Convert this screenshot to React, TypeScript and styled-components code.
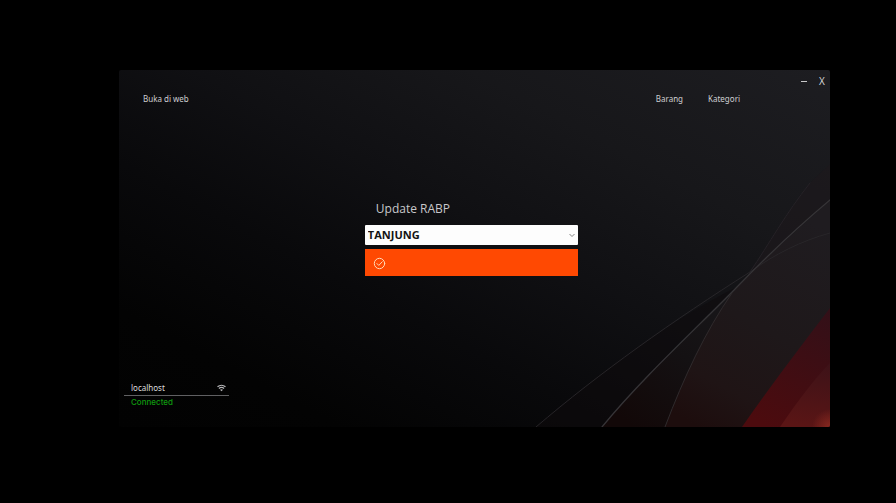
import React from "react";
import styled, { createGlobalStyle } from "styled-components";

const GlobalStyle = createGlobalStyle`
  *, *::before, *::after { box-sizing: border-box; }
  body {
    margin: 0;
    background: #000;
    color: #d2d2d4;
    font-family: "Open Sans", "Noto Sans", sans-serif;
  }
`;

const Desktop = styled.div`
  display: flex;
  min-height: 100vh;
  padding: 70px 66px 76px 119px;
`;

const AppWindow = styled.main`
  position: relative;
  isolation: isolate;
  flex: 1;
  display: grid;
  grid-template-rows: auto auto 1fr auto;
  overflow: hidden;
  border-radius: 2px;
  background: linear-gradient(208deg, #1d1d21 0%, #17171a 26%, #101013 46%, #09090b 64%, #030303 84%, #020202 100%);
`;

const Artwork = styled.svg`
  position: absolute;
  inset: 0;
  z-index: -1;
  width: 100%;
  height: 100%;
`;

const TitleBar = styled.header`
  display: flex;
  justify-content: flex-end;
  gap: 8px;
  height: 22px;
  padding-right: 3px;
`;

const WindowButton = styled.button`
  display: grid;
  place-items: center;
  width: 10px;
  height: 22px;
  padding: 0;
  border: 0;
  background: none;
  color: #d8d8da;
  font: 10px/22px "Open Sans", sans-serif;
`;

const Nav = styled.nav`
  display: flex;
  justify-content: space-between;
  height: 14px;
  padding: 0 90px 0 24px;
`;

const NavGroup = styled.div`
  display: flex;
  gap: 25px;
`;

const NavLink = styled.a`
  color: #cfcfd1;
  font-family: "Noto Sans", "Open Sans", sans-serif;
  font-size: 8px;
  line-height: 14px;
  text-decoration: none;
`;

const Form = styled.form`
  justify-self: center;
  display: flex;
  flex-direction: column;
  width: 30%;
  min-width: 213px;
  padding-top: 94px;
  margin-right: 6px;
`;

const FieldLabel = styled.label`
  padding-left: 11px;
  margin-bottom: 7px;
  color: #c8c8ca;
  font-size: 12px;
  line-height: 18px;
`;

const SelectBox = styled.div`
  position: relative;
  height: 20px;
  margin-bottom: 4px;
`;

const Select = styled.select`
  appearance: none;
  display: block;
  width: 100%;
  height: 20px;
  padding: 0 20px 0 3px;
  border: 0;
  border-radius: 1px;
  background: #fdfdfd;
  color: #141414;
  font: bold 11px/20px "Open Sans", "Noto Sans", sans-serif;
`;

const Chevron = styled.svg`
  position: absolute;
  top: 8px;
  right: 3px;
  width: 6px;
  height: 5px;
  pointer-events: none;
`;

const SubmitButton = styled.button`
  display: flex;
  align-items: center;
  height: 27px;
  padding: 1px 8px 0;
  border: 0;
  background: #ff4902;
`;

const Status = styled.section`
  width: 105px;
  margin: 0 0 18px 5px;
`;

const HostRow = styled.div`
  display: flex;
  align-items: center;
  justify-content: space-between;
  height: 15px;
  padding: 0 3px 0 7px;
  border-bottom: 1px solid #606062;
`;

const HostInput = styled.input`
  width: 70px;
  height: 14px;
  padding: 0;
  border: 0;
  background: none;
  color: #dcdcde;
  font: 8px/14px "Noto Sans", "Open Sans", sans-serif;
`;

const StatusText = styled.p`
  margin: 0;
  padding-left: 7px;
  color: #0f9a0f;
  font-family: Inter, sans-serif;
  font-size: 8px;
  font-weight: 500;
  line-height: 13px;
`;

function Ribbons() {
  return (
    <Artwork viewBox="0 0 711 357" preserveAspectRatio="xMaxYMax slice" aria-hidden="true">
      <defs>
        <linearGradient id="veil" gradientUnits="userSpaceOnUse" x1="690" y1="150" x2="580" y2="357">
          <stop offset="0" stopColor="#1f1c20" />
          <stop offset="0.5" stopColor="#1e181a" />
          <stop offset="0.8" stopColor="#1f1415" />
          <stop offset="1" stopColor="#1d0d0d" />
        </linearGradient>
        <linearGradient id="fold" gradientUnits="userSpaceOnUse" x1="618" y1="217" x2="515" y2="357">
          <stop offset="0" stopColor="#19181b" />
          <stop offset="0.5" stopColor="#141113" />
          <stop offset="1" stopColor="#120808" />
        </linearGradient>
        <linearGradient id="red" gradientUnits="userSpaceOnUse" x1="711" y1="238" x2="650" y2="357">
          <stop offset="0" stopColor="#321018" />
          <stop offset="1" stopColor="#4c0b0e" />
        </linearGradient>
        <linearGradient id="ember" gradientUnits="userSpaceOnUse" x1="700" y1="290" x2="690" y2="357">
          <stop offset="0" stopColor="#3c1218" />
          <stop offset="1" stopColor="#5a1515" />
        </linearGradient>
        <radialGradient id="glow" gradientUnits="userSpaceOnUse" cx="711" cy="357" r="18">
          <stop offset="0" stopColor="#9a3024" stopOpacity="0.7" />
          <stop offset="1" stopColor="#9a3024" stopOpacity="0" />
        </radialGradient>
      </defs>
      <path d="M631 202C650 174 667 143 691 113L711 94V130Z" fill="#1d181c" opacity="0.5" />
      <path d="M417 357C480 303 555 248 618 217C568 263 522 310 483 357Z" fill="#0d090b" opacity="0.5" />
      <path d="M483 357C522 310 568 267 618 217C590 258 565 307 546 357Z" fill="url(#fold)" />
      <path d="M546 357C565 307 586 262 613 223L634 200L711 130V357Z" fill="url(#veil)" />
      <path d="M623 357C650 318 681 277 711 238V357Z" fill="url(#red)" />
      <path d="M661 357C678 332 696 308 711 293V357Z" fill="url(#ember)" />
      <path d="M685 357L711 331V357Z" fill="url(#glow)" />
      <g fill="none" strokeLinecap="round">
        <path d="M417 357C480 303 555 250 631 202C656 184 682 171 711 163" stroke="#29272a" strokeWidth="0.9" />
        <path d="M483 357C524 307 578 258 618 217C649 185 680 156 711 130" stroke="#363437" strokeWidth="1.3" />
        <path d="M546 357C565 307 586 262 613 223" stroke="#2f2a2c" strokeWidth="1" />
        <path d="M631 202C650 174 667 143 691 113" stroke="#282529" strokeWidth="0.8" />
      </g>
    </Artwork>
  );
}

function CheckCircle() {
  return (
    <svg width="13" height="13" viewBox="0 0 13 13" fill="none" stroke="#ffd9b8" strokeLinecap="round" strokeLinejoin="round" aria-hidden="true">
      <circle cx="6.5" cy="6.5" r="5.2" />
      <path d="M4 6.6L5.8 8.4L9.2 4.8" />
    </svg>
  );
}

function Wifi() {
  return (
    <svg width="9" height="8" viewBox="0 0 9 8" fill="none" stroke="#b4b4b6" strokeWidth="1.2" aria-hidden="true">
      <path d="M0.5 2.8C2.8 0.8 6.2 0.8 8.5 2.8" />
      <path d="M1.9 4.5C3.4 3.2 5.6 3.2 7.1 4.5" />
      <path d="M3 5.7C4 5 5 5 6 5.7L4.5 7.3Z" fill="#b4b4b6" stroke="none" />
    </svg>
  );
}

export default function App() {
  return (
    <>
      <GlobalStyle />
      <Desktop>
        <AppWindow>
          <Ribbons />
          <TitleBar>
            <WindowButton type="button" aria-label="Minimize">
              <svg width="6" height="3" viewBox="0 0 6 3" aria-hidden="true">
                <path d="M0 1.5H6" stroke="#c8c8ca" />
              </svg>
            </WindowButton>
            <WindowButton type="button">X</WindowButton>
          </TitleBar>
          <Nav>
            <NavLink href="#web">Buka di web</NavLink>
            <NavGroup>
              <NavLink href="#barang">Barang</NavLink>
              <NavLink href="#kategori">Kategori</NavLink>
            </NavGroup>
          </Nav>
          <Form onSubmit={(event) => event.preventDefault()}>
            <FieldLabel htmlFor="branch">Update RABP</FieldLabel>
            <SelectBox>
              <Select id="branch" defaultValue="TANJUNG">
                <option>TANJUNG</option>
              </Select>
              <Chevron viewBox="0 0 6 5" fill="none" stroke="#858585" aria-hidden="true">
                <path d="M0.5 1L3 3.5L5.5 1" />
              </Chevron>
            </SelectBox>
            <SubmitButton type="submit" aria-label="Update">
              <CheckCircle />
            </SubmitButton>
          </Form>
          <Status>
            <HostRow>
              <HostInput aria-label="Host" defaultValue="localhost" />
              <Wifi />
            </HostRow>
            <StatusText>Connected</StatusText>
          </Status>
        </AppWindow>
      </Desktop>
    </>
  );
}
